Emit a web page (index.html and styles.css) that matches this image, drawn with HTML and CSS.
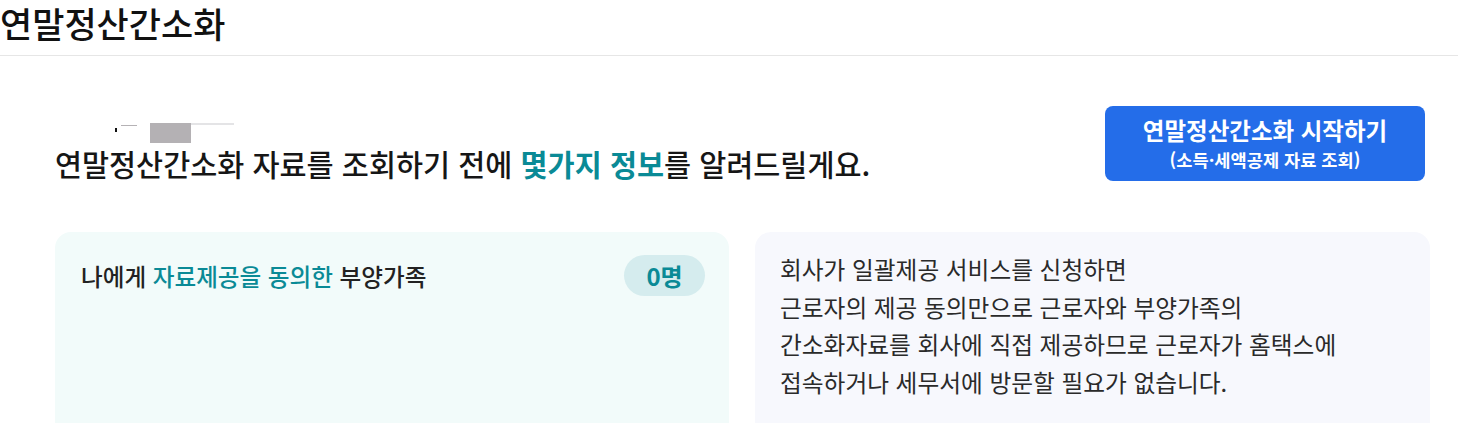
FILE: index.html
```html
<!DOCTYPE html>
<html lang="ko">
<head>
<meta charset="utf-8">
<title>연말정산간소화</title>
<link rel="stylesheet" href="styles.css">
</head>
<body>
<header class="page-head">
  <h1 class="page-title">연말정산간소화</h1>
</header>
<main class="content">
  <section class="intro">
    <div class="intro-text">
      <div class="redacted">
        <span class="r-dot"></span>
        <span class="r-line"></span>
        <span class="r-block"></span>
        <span class="r-thin"></span>
      </div>
      <h2 class="intro-heading">연말정산간소화 자료를 조회하기 전에 <em class="hl">몇가지 정보</em>를 알려드릴게요.</h2>
    </div>
    <button class="start-btn" type="button">
      <span class="btn-main">연말정산간소화 시작하기</span>
      <span class="btn-sub">(소득·세액공제 자료 조회)</span>
    </button>
  </section>
  <section class="cards">
    <div class="card card-teal">
      <div class="card-row">
        <p class="card-title">나에게 <span class="hl">자료제공을 동의한</span> 부양가족</p>
        <span class="badge">0명</span>
      </div>
    </div>
    <div class="card card-blue">
      <p class="card-desc">회사가 일괄제공 서비스를 신청하면<br>근로자의 제공 동의만으로 근로자와 부양가족의<br>간소화자료를 회사에 직접 제공하므로 근로자가 홈택스에<br>접속하거나 세무서에 방문할 필요가 없습니다.</p>
    </div>
  </section>
</main>
</body>
</html>
```
FILE: styles.css
```css
* { box-sizing: border-box; }
html, body { margin: 0; padding: 0; background: #fff; }
body {
  font-family: "Noto Sans CJK KR", "Noto Sans", sans-serif;
  color: #111;
  overflow: hidden;
}
.page-head {
  height: 56px;
  padding-top: 3px;
  border-bottom: 1px solid #e6e6e6;
}
.page-title {
  margin: 0;
  font-size: 35px;
  font-weight: 500;
  line-height: 40px;
  color: #111;
}
.content {
  padding: 50px 28px 0 55px;
}
.intro {
  display: flex;
  justify-content: space-between;
  align-items: flex-end;
  padding-right: 5px;
}
.intro-text {
  display: flex;
  flex-direction: column;
}
.redacted {
  position: relative;
  height: 39px;
  margin-left: 60px;
}
.redacted span { position: absolute; display: block; }
.r-dot { left: 0; top: 22px; width: 2px; height: 4px; background: #111; }
.r-line { left: 6px; top: 19px; width: 16px; height: 1px; background: #b5b2b5; }
.r-block { left: 35px; top: 17px; width: 41px; height: 20px; background: #b4b1b4; }
.r-thin { left: 76px; top: 17px; width: 43px; height: 2px; background: #e4e4e6; }
.intro-heading {
  margin: 0;
  font-size: 29.4px;
  font-weight: 500;
  line-height: 36px;
  color: #161616;
}
.hl {
  font-style: normal;
  color: #0a8a96;
  font-weight: 700;
}
.start-btn {
  width: 320px;
  height: 75px;
  border: 0;
  border-radius: 8px;
  background: #246de9;
  color: #fff;
  font-family: inherit;
  display: flex;
  flex-direction: column;
  align-items: center;
  justify-content: center;
  padding: 0 0 1px;
  cursor: pointer;
}
.btn-main {
  display: block;
  font-size: 23.5px;
  font-weight: 700;
  line-height: 34px;
}
.btn-sub {
  display: block;
  font-size: 17.6px;
  font-weight: 700;
  line-height: 26px;
}
.cards {
  margin-top: 51px;
  display: grid;
  grid-template-columns: 674px 675px;
  gap: 26px;
}
.card {
  border-radius: 16px;
  min-height: 220px;
}
.card-teal {
  background: #f2fbfa;
  padding: 23px 24px 0 26px;
}
.card-blue {
  background: #f7f8fd;
  padding: 19px 24px 0 25px;
}
.card-row {
  display: flex;
  justify-content: space-between;
  align-items: center;
}
.card-title {
  margin: 0;
  font-size: 23.6px;
  font-weight: 500;
  line-height: 30px;
  color: #222;
}
.card-title .hl { font-weight: 500; }
.badge {
  height: 41px;
  min-width: 81px;
  padding: 0 20px;
  border-radius: 21px;
  background: #d5ecee;
  color: #0a8a96;
  font-size: 24px;
  font-weight: 700;
  line-height: 41px;
  text-align: center;
}
.card-desc {
  margin: 0;
  font-size: 23.7px;
  font-weight: 400;
  line-height: 37.7px;
  color: #2a2a2a;
}
```
